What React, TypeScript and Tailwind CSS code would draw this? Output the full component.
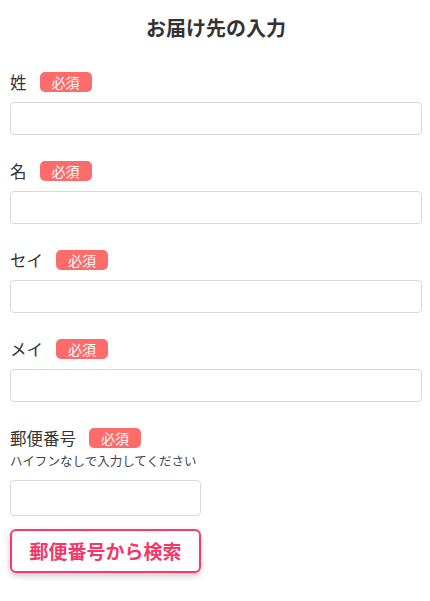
import React from 'react';

const fields = [
  { label: '姓', name: 'lastName' },
  { label: '名', name: 'firstName' },
  { label: 'セイ', name: 'lastKana' },
  { label: 'メイ', name: 'firstKana' },
];

const Required: React.FC = () => (
  <span className="ml-[13px] inline-flex h-5 w-[52px] items-center justify-center rounded-[5px] bg-[#fe6b6b] text-[14px] leading-none text-white">
    必須
  </span>
);

const App: React.FC = () => {
  return (
    <div
      className="min-h-[601px] bg-white pl-[10px] pr-[8px] text-[#333]"
      style={{ fontFamily: '"Noto Sans CJK JP", "Noto Sans", sans-serif' }}
    >
      <h1 className="pt-[14px] text-center text-[20px] font-bold leading-[28px] text-[#333]">
        お届け先の入力
      </h1>

      <div className="mt-[30px] flex flex-col gap-[26px]">
        {fields.map((f) => (
          <div key={f.name}>
            <div className="flex h-5 items-center">
              <span className="text-[16.5px] leading-5">{f.label}</span>
              <Required />
            </div>
            <input
              name={f.name}
              className="mt-[10px] block h-[33px] w-full rounded-[4px] border border-[#d9d9d9] bg-white px-2 text-[16px] outline-none"
            />
          </div>
        ))}

        <div>
          <div className="flex h-5 items-center">
            <span className="text-[16.5px] leading-5">郵便番号</span>
            <Required />
          </div>
          <p className="mt-[4px] text-[12.5px] leading-[18px] text-[#444]">ハイフンなしで入力してください</p>
          <input
            name="zip"
            className="mt-[10px] block h-[36px] w-[191px] rounded-[4px] border border-[#d9d9d9] bg-white px-2 text-[16px] outline-none"
          />
          <button className="mt-[13px] flex h-[44px] w-[191px] items-center justify-center rounded-[6px] border-2 border-[#ff3768] bg-white text-[19px] font-bold text-[#f5376a] shadow-[0_3px_6px_rgba(0,0,0,0.2)]">
            郵便番号から検索
          </button>
        </div>
      </div>
    </div>
  );
};

export default App;
